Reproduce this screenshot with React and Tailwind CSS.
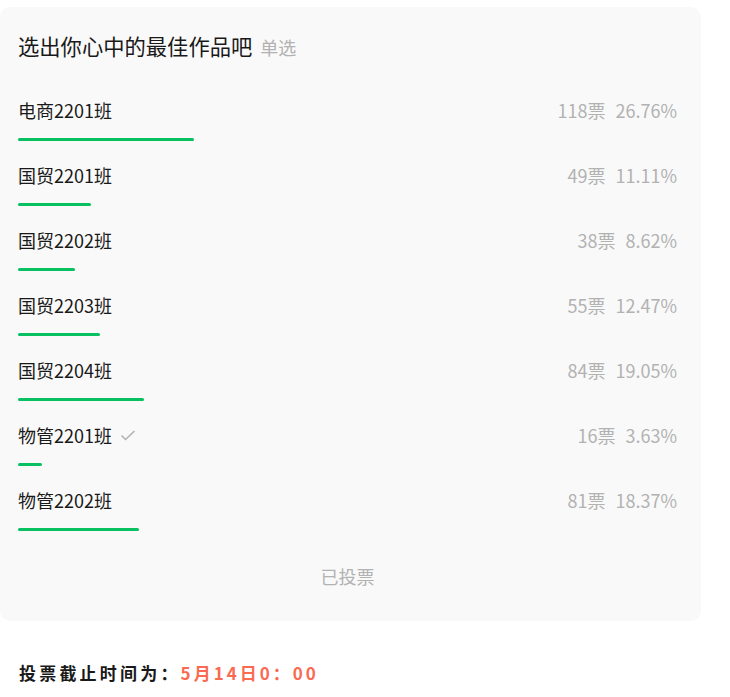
import React from "react";

const options = [
  { name: "电商2201班", votes: 118, pct: 26.76 },
  { name: "国贸2201班", votes: 49, pct: 11.11 },
  { name: "国贸2202班", votes: 38, pct: 8.62 },
  { name: "国贸2203班", votes: 55, pct: 12.47 },
  { name: "国贸2204班", votes: 84, pct: 19.05 },
  { name: "物管2201班", votes: 16, pct: 3.63, picked: true },
  { name: "物管2202班", votes: 81, pct: 18.37 },
];

const font = {
  fontFamily: '"Noto Sans CJK SC", "Noto Sans", sans-serif',
};

const App = () => {
  return (
    <div className="min-h-[697px] w-[730px] bg-white pt-[7px]" style={font}>
      <div className="w-[701px] rounded-[10px] bg-[#f9f9f9] pl-[18px] pr-[24px] pt-[25px] pb-[32px]">
        <div className="flex items-baseline h-[28px] leading-[28px]">
          <span className="text-[21.3px] text-[#191919]">选出你心中的最佳作品吧</span>
          <span className="ml-[8px] text-[18px] text-[#b2b2b2]">单选</span>
        </div>

        <div className="mt-[37px]">
          {options.map((o) => (
            <div key={o.name} className="mb-[21px]">
              <div className="flex items-center justify-between h-[26px] leading-[26px]">
                <div className="flex items-center text-[18px] text-[#191919]">
                  {o.name}
                  {o.picked && (
                    <svg
                      className="ml-[8px] w-[16px] h-[16px]"
                      viewBox="0 0 16 16"
                      fill="none"
                      stroke="#b2b2b2"
                      strokeWidth={1.6}
                    >
                      <path d="M1.5 8.5 L5.5 12.5 L14.5 4" />
                    </svg>
                  )}
                </div>
                <div className="text-[18px] text-[#b2b2b2]">
                  {o.votes}票<span className="ml-[10px]">{o.pct.toFixed(2)}%</span>
                </div>
              </div>
              <div className="mt-[15px] h-[3px]">
                <div
                  className="h-[3px] rounded-full bg-[#07c160]"
                  style={{ width: `${o.pct}%` }}
                />
              </div>
            </div>
          ))}
        </div>

        <div className="text-center text-[18px] leading-[26px] text-[#b2b2b2] mt-[32px]">
          已投票
        </div>
      </div>

      <div className="mt-[39px] pl-[19px] text-[17px] font-bold leading-[26px] tracking-[3.2px]">
        <span className="text-[#191919]">投票截止时间为：</span>
        <span className="text-[#fa6a52] tracking-[3px]">5月14日0：00</span>
      </div>
    </div>
  );
};

export default App;
